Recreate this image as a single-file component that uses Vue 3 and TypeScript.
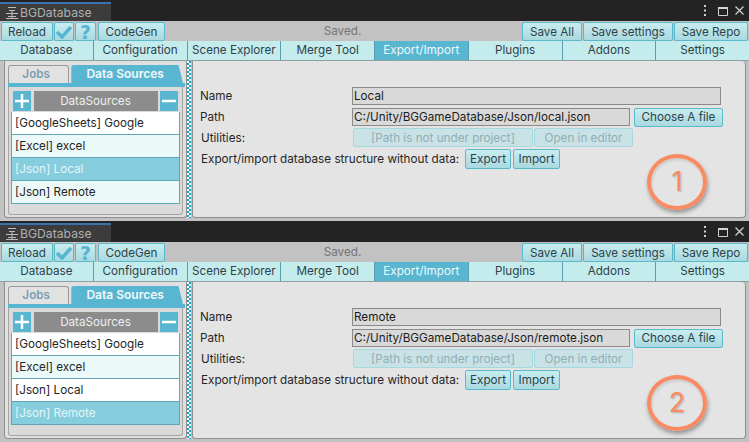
<script setup lang="ts">
interface DbWindow {
  id: number
  name: string
  file: string
  selected: number
}

const windows: DbWindow[] = [
  { id: 1, name: 'Local', file: 'local.json', selected: 2 },
  { id: 2, name: 'Remote', file: 'remote.json', selected: 3 }
]

const tabs = ['Database', 'Configuration', 'Scene Explorer', 'Merge Tool', 'Export/Import', 'Plugins', 'Addons', 'Settings']
const sources = ['[GoogleSheets] Google', '[Excel] excel', '[Json] Local', '[Json] Remote']
</script>

<template>
  <div class="page">
    <section v-for="win in windows" :key="win.id" class="window">
      <header class="titlebar">
        <div class="title-tab">
          <svg class="title-icon" width="12" height="13" viewBox="0 0 12 13">
            <path d="M2 1.5h8M3 4.500h6M0 7.500h12M2 10.500h8M0 12.500h12" stroke="#bcbcbc" stroke-width="1" fill="none" />
            <path d="M6 4.500v8" stroke="#bcbcbc" stroke-width="1" />
          </svg>
          <span>BGDatabase</span>
        </div>
        <div class="title-actions">
          <svg class="dots" width="4" height="11" viewBox="0 0 4 11"><path d="M1 0h2v2H1zM1 4.500h2v2H1zM1 9h2v2H1z" fill="#d2d2d2" /></svg>
          <svg class="maximize" width="10" height="10" viewBox="0 0 10 10"><path d="M.5 1.500h9v8h-9z" stroke="#d2d2d2" fill="none" /><path d="M0 2h10" stroke="#d2d2d2" stroke-width="2" /></svg>
          <svg width="9" height="9" viewBox="0 0 9 9"><path d="M.5.5l8 8M8.500.5l-8 8" stroke="#d2d2d2" stroke-width="1.200" fill="none" /></svg>
        </div>
      </header>

      <div class="toolbar">
        <button class="btn reload">Reload</button>
        <button class="btn icon-btn">
          <svg width="18" height="14" viewBox="0 0 18 14"><path d="M2 7l5 5L16 2" stroke="#58b5d2" stroke-width="3.500" fill="none" /></svg>
        </button>
        <button class="btn icon-btn help">?</button>
        <button class="btn codegen">CodeGen</button>
        <span class="status">Saved.</span>
        <button class="btn save-all">Save All</button>
        <button class="btn save-settings">Save settings</button>
        <button class="btn save-repo">Save Repo</button>
      </div>

      <nav class="tabs">
        <div v-for="tab in tabs" :key="tab" class="tab" :class="{ active: tab === 'Export/Import' }">{{ tab }}</div>
      </nav>

      <div class="body">
        <aside class="left-panel">
          <div class="sub-tabs">
            <div class="sub-tab jobs">Jobs</div>
            <div class="sub-tab sources">Data Sources</div>
          </div>
          <div class="sub-line"></div>
          <div class="list-box">
            <div class="list-head">
              <div class="square">
                <svg width="14" height="14" viewBox="0 0 14 14"><path d="M7 0v14M0 7h14" stroke="#fff" stroke-width="2.500" /></svg>
              </div>
              <div class="list-title">DataSources</div>
              <div class="square">
                <svg width="14" height="14" viewBox="0 0 14 14"><path d="M0 7h14" stroke="#fff" stroke-width="2.500" /></svg>
              </div>
            </div>
            <div class="rows">
              <div
                v-for="(row, i) in sources"
                :key="row"
                class="row"
                :class="{ odd: i % 2 === 1, selected: i === win.selected }"
              >{{ row }}</div>
            </div>
          </div>
        </aside>

        <div class="splitter"></div>

        <main class="right-panel">
          <div class="form-row name-row">
            <label>Name</label>
            <div class="field wide">{{ win.name }}</div>
          </div>
          <div class="form-row path-row">
            <label>Path</label>
            <div class="field path">C:/Unity/BGGameDatabase/Json/{{ win.file }}</div>
            <button class="btn choose">Choose A file</button>
          </div>
          <div class="form-row util-row">
            <label>Utilities:</label>
            <button class="btn disabled not-under">[Path is not under project]</button>
            <button class="btn disabled open-editor">Open in editor</button>
          </div>
          <div class="form-row export-row">
            <span>Export/import database structure without data:</span>
            <button class="btn export">Export</button>
            <button class="btn import">Import</button>
          </div>
          <div class="callout">{{ win.id }}</div>
        </main>
      </div>
    </section>
  </div>
</template>

<style>
html, body { margin: 0; background: #232323; overflow: hidden; }
</style>

<style scoped>
.page {
  width: 749px;
  height: 442px;
  font-family: Inter, "Liberation Sans", sans-serif;
  font-size: 11.7px;
  color: #262626;
}

.window {
  height: 221px;
  display: flex;
  flex-direction: column;
  background: #c2c2c2;
}

.titlebar {
  height: 21px;
  flex: none;
  display: flex;
  justify-content: space-between;
  background: #232323;
}

.title-tab {
  width: 111px;
  box-sizing: border-box;
  margin-top: 2px;
  border-top: 2px solid #3a72b0;
  background: #3c3c3c;
  color: #b0b0b0;
  font-size: 12.2px;
  display: flex;
  align-items: center;
  padding-left: 6px;
  gap: 2px;
}

.title-icon { flex: none; }

.title-actions {
  display: flex;
  align-items: center;
  padding-right: 5px;
  gap: 7px;
}

.dots { margin-right: 4px; }

.btn {
  box-sizing: border-box;
  margin: 0;
  padding: 0;
  font: inherit;
  color: #2f424a;
  border: 1px solid #5cb9c9;
  border-radius: 2px;
  background: linear-gradient(#c8edf0, #a9d9e0);
  white-space: nowrap;
  display: flex;
  align-items: center;
  justify-content: center;
}

.toolbar {
  height: 20px;
  flex: none;
  display: flex;
  padding: 1px 1px 0;
  box-sizing: border-box;
  background: #c2c2c2;
}

.toolbar .btn { height: 19px; }
.reload { width: 52px; }
.icon-btn { width: 20px; margin-left: 1px; }
.help {
  width: 21px;
  color: #58b5d2;
  font-family: "DejaVu Sans", sans-serif;
  font-weight: 700;
  font-size: 19px;
}
.codegen { width: 67px; margin-left: 2px; }
.status { flex: 1; text-align: center; color: #747474; line-height: 19px; padding-right: 2px; }
.save-all { width: 60px; }
.save-settings { width: 90px; margin-left: 1px; }
.save-repo { width: 74px; margin-left: 1px; }

.tabs {
  height: 20px;
  flex: none;
  display: flex;
  border-bottom: 1px solid #8d9fa3;
  box-sizing: border-box;
}

.tab {
  flex: 1;
  text-align: center;
  line-height: 19px;
  background: #c5eced;
  border-right: 1px solid #5a9fb0;
  color: #2f424a;
}

.tab:last-child { border-right: 0; }
.tab.active { background: #58b6d0; color: #eef8fb; }

.body {
  flex: 1;
  min-height: 0;
  display: flex;
  padding: 0 3px 3px 4px;
}

.left-panel {
  width: 183px;
  box-sizing: border-box;
  border: 1px solid #8f8f8f;
  border-top: 0;
  border-radius: 0 0 4px 4px;
  background: #e0e0e0;
  padding: 4px 3px 2px 3px;
  display: flex;
  flex-direction: column;
}

.sub-tabs {
  height: 18px;
  flex: none;
  display: flex;
  gap: 2px;
  font-weight: 600;
}

.sub-tab {
  text-align: center;
  line-height: 18px;
  border-radius: 3px 3px 0 0;
}

.jobs {
  width: 62px;
  box-sizing: border-box;
  background: #e2e2e2;
  border: 1px solid #9a9a9a;
  border-bottom: 0;
  color: #7d9fb2;
  line-height: 16px;
  padding-right: 5px;
}

.sources {
  width: 113px;
  box-sizing: border-box;
  padding-right: 4px;
  background: #58b6d0;
  color: #f1fafc;
  font-size: 12px;
  clip-path: polygon(0 0, 96% 0, 100% 100%, 0 100%);
}

.sub-line {
  height: 4px;
  flex: none;
  width: 177px;
  background: #58b6d0;
}

.list-box {
  flex: 1;
  box-sizing: border-box;
  width: 175px;
  border: 1px solid #a5a5a5;
  border-top: 0;
  border-radius: 0 0 3px 3px;
  background: #dadada;
  padding: 4px 2px;
}

.list-head {
  height: 20px;
  display: flex;
  justify-content: space-between;
  padding: 0 2px;
}

.square {
  width: 18px;
  height: 20px;
  box-sizing: border-box;
  background: #58b6d0;
  display: flex;
  align-items: center;
  justify-content: center;
}

.list-title {
  width: 124px;
  background: #8c8c8c;
  color: #eeeeee;
  text-align: center;
  line-height: 20px;
}

.rows {
  width: 169px;
  box-sizing: border-box;
  border: 1px solid #62a5b5;
  border-top: 0;
  margin-top: 1px;
}

.row {
  height: 22px;
  line-height: 22px;
  padding-left: 3px;
  background: #ffffff;
  border-bottom: 1px solid #62a5b5;
}

.row:last-child { border-bottom: 0; }
.row.odd { background: #ecf9f9; }
.row.selected { background: #86cddd; color: #e4f5f8; }

.splitter {
  width: 4px;
  flex: none;
  margin-right: 1px;
  background: repeating-conic-gradient(#1ba3c6 0 25%, #ffffff 0 50%) 0 0 / 4px 4px;
}

.right-panel {
  position: relative;
  flex: 1;
  box-sizing: border-box;
  border: 1px solid #8f8f8f;
  border-top: 0;
  border-radius: 0 4px 4px 4px;
  background: #e4e4e4;
  padding: 26px 0 0 7px;
}

.form-row {
  display: flex;
  align-items: center;
  white-space: nowrap;
}

.form-row label { width: 152px; flex: none; }

.name-row { height: 18px; }
.name-row label, .path-row label { line-height: 18px; }

.field {
  box-sizing: border-box;
  height: 18px;
  border: 1px solid #8a8a8a;
  background: #d9d9d9;
  line-height: 16px;
  padding-left: 1px;
  color: #1c1c1c;
}

.wide { width: 369px; }

.path-row { margin-top: 3px; height: 18px; }
.path { width: 278px; }
.choose { width: 89px; height: 19px; margin-left: 4px; }

.util-row { margin-top: 2px; height: 19px; padding-left: 1px; }
.util-row label { width: 152px; }

.disabled {
  height: 19px;
  color: #93adb4;
  border-color: #a5d8df;
  background: #c9e2e6;
}

.not-under { width: 180px; }
.open-editor { width: 99px; margin-left: 1px; }

.export-row { margin-top: 2px; height: 20px; padding-left: 1px; }
.export-row span { width: 264px; flex: none; }
.export { width: 46px; height: 20px; }
.import { width: 47px; height: 20px; margin-left: 2px; }

/* hand drawn annotation sits over the panel */
.callout {
  position: absolute;
  left: 454px;
  top: 93px;
  width: 60px;
  height: 56px;
  box-sizing: border-box;
  border: 4px solid #fa8a62;
  border-radius: 50%;
  box-shadow: 1px 3px 4px rgba(0, 0, 0, 0.35), inset 1px 2px 3px rgba(0, 0, 0, 0.12);
  color: #fa8a62;
  font-size: 27px;
  text-align: center;
  line-height: 48px;
  text-shadow: 1px 1px 2px rgba(0, 0, 0, 0.25);
}
</style>
